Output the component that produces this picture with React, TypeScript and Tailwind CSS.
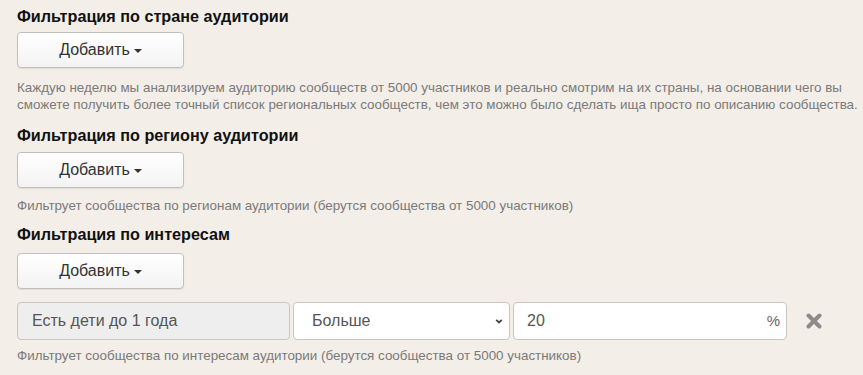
import React from "react";

const Heading = ({ children }: { children: React.ReactNode }) => (
  <div className="text-[16.2px] font-bold leading-5 text-[#111]">{children}</div>
);

const Help = ({ children }: { children: React.ReactNode }) => (
  <div className="whitespace-nowrap text-[13.4px] leading-[17px] text-[#7a7a7a]">{children}</div>
);

const AddButton = () => (
  <button className="flex h-9 w-[167px] items-center justify-center gap-1 rounded border border-[#c3c0bb] bg-gradient-to-b from-white to-[#f3f3f3] text-[16px] text-[#333] shadow-[0_1px_1px_rgba(0,0,0,0.08)]">
    Добавить
    <span className="mt-[2px] h-0 w-0 border-x-[4px] border-t-[4px] border-x-transparent border-t-[#333]" />
  </button>
);

const App = () => {
  return (
    <div
      className="h-[375px] w-[863px] overflow-hidden bg-[#f3eee8] px-[17px] pt-[6px]"
      style={{ fontFamily: '"Liberation Sans", Arial, sans-serif' }}
    >
      <Heading>Фильтрация по стране аудитории</Heading>
      <div className="mt-[6px]">
        <AddButton />
      </div>
      <div className="mt-[11px]">
        <Help>
          Каждую неделю мы анализируем аудиторию сообществ от 5000 участников и реально смотрим на их страны, на основании чего вы
          <br />
          сможете получить более точный список региональных сообществ, чем это можно было сделать ища просто по описанию сообщества.
        </Help>
      </div>

      <div className="mt-[12px]">
        <Heading>Фильтрация по региону аудитории</Heading>
      </div>
      <div className="mt-[7px]">
        <AddButton />
      </div>
      <div className="mt-[9px]">
        <Help>Фильтрует сообщества по регионам аудитории (берутся сообщества от 5000 участников)</Help>
      </div>

      <div className="mt-[10px]">
        <Heading>Фильтрация по интересам</Heading>
      </div>
      <div className="mt-[9px]">
        <AddButton />
      </div>

      <div className="mt-[13px] flex items-center gap-[3px]">
        <div className="flex h-[38px] w-[273px] items-center rounded border border-[#c9c6c1] bg-[#eeeeee] px-[14px] text-[16px] text-[#555]">
          Есть дети до 1 года
        </div>
        <div className="flex h-[38px] w-[217px] items-center justify-between rounded border border-[#c9c6c1] bg-white pl-[18px] pr-[5px] text-[16px] text-[#555]">
          Больше
          <svg width="10" height="10" viewBox="0 0 10 10" className="text-[#444]">
            <path d="M2.2 3.8 L5 6.4 L7.8 3.8" fill="none" stroke="currentColor" strokeWidth="1.8" />
          </svg>
        </div>
        <div className="flex h-[38px] w-[274px] items-center justify-between rounded border border-[#c9c6c1] bg-white pl-[13px] pr-[6px] text-[16px] text-[#555]">
          20
          <span className="text-[15px] text-[#666]">%</span>
        </div>
        <svg width="16" height="16" viewBox="0 0 16 16" className="ml-[16px] text-[#8c8c8c]">
          <path d="M2.5 2.5 L13.5 13.5 M13.5 2.5 L2.5 13.5" stroke="currentColor" strokeWidth="4" strokeLinecap="round" />
        </svg>
      </div>
      <div className="mt-[7px]">
        <Help>Фильтрует сообщества по интересам аудитории (берутся сообщества от 5000 участников)</Help>
      </div>
    </div>
  );
};

export default App;
